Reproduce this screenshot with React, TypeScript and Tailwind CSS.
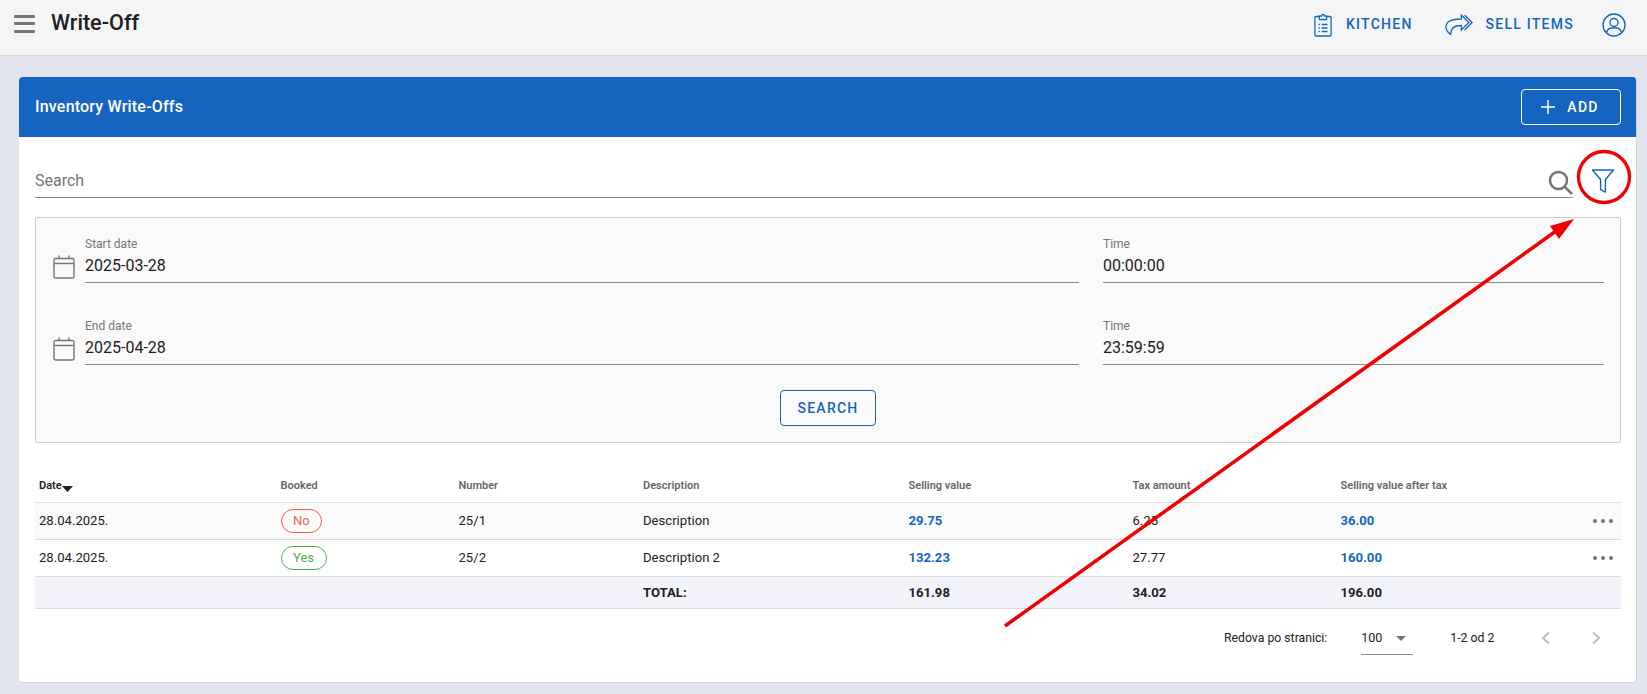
import React from "react";

const cols = "grid grid-cols-[241.5px_178px_184.5px_265.5px_224px_208px_1fr] items-center pl-1";

function Cal() {
  return (
    <svg width="22" height="24" viewBox="0 0 22 24" fill="none" stroke="#757575" strokeWidth="1.4" className="shrink-0">
      <rect x="1" y="3.5" width="20" height="19.5" rx="1.5" />
      <path d="M1 8.500h20M6 0.500v3M16 0.500v3" />
    </svg>
  );
}

function Field({ label, value, className = "" }: { label: string; value: string; className?: string }) {
  return (
    <div className={"h-[50px] border-b border-[#8a8a8a] flex flex-col " + className}>
      <span className="text-[12px] leading-[14px] text-[#757575] mt-[4px]">{label}</span>
      <span className="text-[16px] leading-[20px] text-[#212121] mt-[5px]">{value}</span>
    </div>
  );
}

function Head({ children, dark }: { children: React.ReactNode; dark?: boolean }) {
  return <span className={"text-[11px] font-semibold " + (dark ? "text-[#212121]" : "text-[#666666]")}>{children}</span>;
}

function Dots() {
  return (
    <svg width="22" height="6" viewBox="0 0 22 6" fill="#757575">
      <circle cx="3" cy="3" r="2" />
      <circle cx="11" cy="3" r="2" />
      <circle cx="19" cy="3" r="2" />
    </svg>
  );
}

function Row({ no, pill, pillClass, desc, sv, tax, after, bg, h }: any) {
  return (
    <div className={cols + " h-[37px] border-b border-[#dcdcdc] text-[13.12px] text-[#212121] " + bg}>
      <span>{no}</span>
      <span>
        <span className={"inline-flex items-center justify-center h-6 rounded-full border px-[11.5px] text-[13px] " + pillClass}>{pill}</span>
      </span>
      <span>{h}</span>
      <span>{desc}</span>
      <span className="font-bold text-[#1565c0]">{sv}</span>
      <span>{tax}</span>
      <div className="flex items-center justify-between pr-[7px]">
        <span className="font-bold text-[#1565c0]">{after}</span>
        <Dots />
      </div>
    </div>
  );
}

export default function App() {
  return (
    <div className="relative h-[694px] overflow-hidden bg-[#e2e5ee] font-['Roboto',sans-serif]">
      <header className="h-[56px] bg-[#f5f5f5] border-b border-[#d8d8d8] flex items-center pb-[8px]">
        <div className="ml-[14px] w-[21px] h-[18px] flex flex-col justify-between">
          <span className="h-[3px] bg-[#757575] rounded-[1px]" />
          <span className="h-[3px] bg-[#757575] rounded-[1px]" />
          <span className="h-[3px] bg-[#757575] rounded-[1px]" />
        </div>
        <h1 className="ml-[16px] text-[21.6px] font-medium text-[#212121]">Write-Off</h1>
        <div className="ml-auto mt-[2px] flex items-center text-[#1565c0] text-[14px] font-medium tracking-[1.25px]">
          <svg width="18" height="24" viewBox="0 0 20 24" preserveAspectRatio="none" fill="none" stroke="#1565c0" strokeWidth="1.4" className="mr-[14px]">
            <path d="M6 3.500H2.200A1.200 1.200 0 0 0 1 4.700v17.100A1.200 1.200 0 0 0 2.200 23h15.600a1.200 1.200 0 0 0 1.200-1.200V4.700a1.200 1.200 0 0 0-1.200-1.200H14" />
            <path d="M6 6.500V3h2.500a1.500 1.500 0 0 1 3 0H14v3.500z" />
            <path d="M8.500 11.500h6.500M8.500 15h6.500M8.500 18.500h6.500M5 11.500h1.500M5 15h1.500M5 18.500h1.500" />
          </svg>
          <span>KITCHEN</span>
          <svg width="28" height="22" viewBox="0 0 30 22" preserveAspectRatio="none" fill="none" stroke="#1565c0" strokeWidth="1.4" className="ml-[32px] mr-[13px]">
            <path d="M17.500 1l8 7.500-8 7.500v-4.500c-7 0-10.500 1.500-11.500 9-2-1.500-5-3.500-5-7.500 0-5 6-8 16.500-8z" />
            <path d="M21 1l8 7.500-8 7.500" />
          </svg>
          <span>SELL ITEMS</span>
          <svg width="24" height="24" viewBox="0 0 24 24" fill="none" stroke="#1565c0" strokeWidth="1.4" className="ml-[28px] mr-[21px]">
            <circle cx="12" cy="12" r="11" />
            <circle cx="12" cy="9.500" r="4" />
            <path d="M4.500 19.500c1-3 3-4.500 5-4.500h5c2 0 4 1.500 5 4.500" />
          </svg>
        </div>
      </header>

      <main className="pt-[21px] pl-[19px] pr-[10px]">
        <section className="h-[606px] bg-white rounded-[4px] overflow-hidden border-r border-b border-[#d0d4de]">
          <div className="h-[60px] bg-[#1565c0] flex items-center justify-between pl-4 pr-[15px]">
            <h2 className="text-[16px] font-medium tracking-[0.2px] text-white">Inventory Write-Offs</h2>
            <button className="w-[100px] h-[36px] border border-white rounded-[4px] text-white text-[14px] font-medium tracking-[1.25px] flex items-center justify-center gap-[12px] pr-[2px]">
              <svg width="14" height="14" viewBox="0 0 14 14" stroke="white" strokeWidth="1.500" fill="none"><path d="M7 0v14M0 7h14" /></svg>
              ADD
            </button>
          </div>

          <div className="pl-4 pr-[15px]">
            <div className="flex items-end mt-[30px] h-[31px]">
              <div className="flex-1 h-[31px] border-b border-[#8a8a8a] flex items-center justify-between pb-[2px]">
                <span className="text-[16px] text-[#757575]">Search</span>
                <svg width="25" height="25" viewBox="0 0 25 25" fill="none" stroke="#757575" strokeWidth="2.500" className="mb-[-3px]">
                  <circle cx="10.500" cy="10.500" r="8.500" /><path d="M16.800 16.800L24 24" />
                </svg>
              </div>
              <div className="w-[48px] flex justify-center self-center">
                <svg width="24" height="24" viewBox="0 0 24 25" fill="none" stroke="#1565c0" strokeWidth="1.500" strokeLinejoin="round" className="ml-[12px] mt-[-3px]">
                  <path d="M1 1h22l-8.500 10v13l-5-2.500V11z" />
                </svg>
              </div>
            </div>

            <div className="mt-[19px] h-[226px] border border-[#cccccc] rounded-[2px] bg-[#fafafa] pl-[17px] pr-[16px] pt-[15px]">
              <div className="flex flex-col gap-[32px]">
                {[["Start date", "2025-03-28", "00:00:00"], ["End date", "2025-04-28", "23:59:59"]].map(([l, d, t]) => (
                  <div key={l} className="flex items-end">
                    <div className="mb-[4px] mr-[10px]"><Cal /></div>
                    <Field label={l} value={d} className="w-[994px]" />
                    <Field label="Time" value={t} className="ml-[24px] flex-1" />
                  </div>
                ))}
              </div>
              <div className="flex justify-center mt-[25px] pr-[1px]">
                <button className="w-[96px] h-[36px] border border-[#1565c0] rounded-[4px] text-[#1565c0] text-[14px] font-medium tracking-[1.25px]">SEARCH</button>
              </div>
            </div>

            <div className="mt-[21px]">
              <div className={cols + " h-[39px] border-b border-[#dcdcdc] pt-[6px]"}>
                <span className="flex items-center">
                  <Head dark>Date</Head>
                  <svg width="11" height="6" viewBox="0 0 11 6" className="mt-[5px]"><path d="M0 0h11L5.500 6z" fill="#212121" /></svg>
                </span>
                <Head>Booked</Head>
                <Head>Number</Head>
                <Head>Description</Head>
                <Head>Selling value</Head>
                <Head>Tax amount</Head>
                <Head>Selling value after tax</Head>
              </div>
              <Row no="28.04.2025." pill="No" pillClass="border-[#f05a5a] text-[#f26060]" h="25/1" desc="Description" sv="29.75" tax="6.25" after="36.00" bg="bg-[#fafafa]" />
              <Row no="28.04.2025." pill="Yes" pillClass="border-[#4caf50] text-[#4caf50]" h="25/2" desc="Description 2" sv="132.23" tax="27.77" after="160.00" bg="bg-white" />
              <div className={cols + " h-[32px] border-b border-[#dcdcdc] bg-[#f2f3fb] text-[13.12px] font-bold text-[#212121]"}>
                <span /><span /><span />
                <span>TOTAL:</span>
                <span>161.98</span>
                <span>34.02</span>
                <span>196.00</span>
              </div>
            </div>

            <div className="flex items-center h-[60px] text-[12.25px] text-[#212121] pb-[2px]">
              <span className="ml-[1189px]">Redova po stranici:</span>
              <div className="ml-[34px] w-[52px] h-[32px] border-b border-[#8a8a8a] flex items-center justify-between pr-[6px] mt-[2px] text-[12.500px]">
                <span>100</span>
                <svg width="10" height="5" viewBox="0 0 10 5" className="mr-[1px]"><path d="M0 0h10L5 5z" fill="#757575" /></svg>
              </div>
              <span className="ml-[37px]">1-2 od 2</span>
              <svg width="10" height="14" viewBox="0 0 10 14" fill="none" stroke="#bdbdbd" strokeWidth="2" className="ml-[47px]"><path d="M8 1.500L2 7l6 5.500" /></svg>
              <svg width="10" height="14" viewBox="0 0 10 14" fill="none" stroke="#bdbdbd" strokeWidth="2" className="ml-[40px]"><path d="M2 1.500L8 7l-6 5.500" /></svg>
            </div>
          </div>
        </section>
      </main>

      <svg width="1647" height="694" viewBox="0 0 1647 694" className="absolute inset-0 pointer-events-none" fill="none">
        <circle cx="1604" cy="177" r="25.500" stroke="#f00000" strokeWidth="3.300" />
        <path d="M1005 626L1556 231" stroke="#f00000" strokeWidth="3.500" />
        <path d="M1574 219L1550 226L1559 239z" fill="#f00000" />
      </svg>
    </div>
  );
}
